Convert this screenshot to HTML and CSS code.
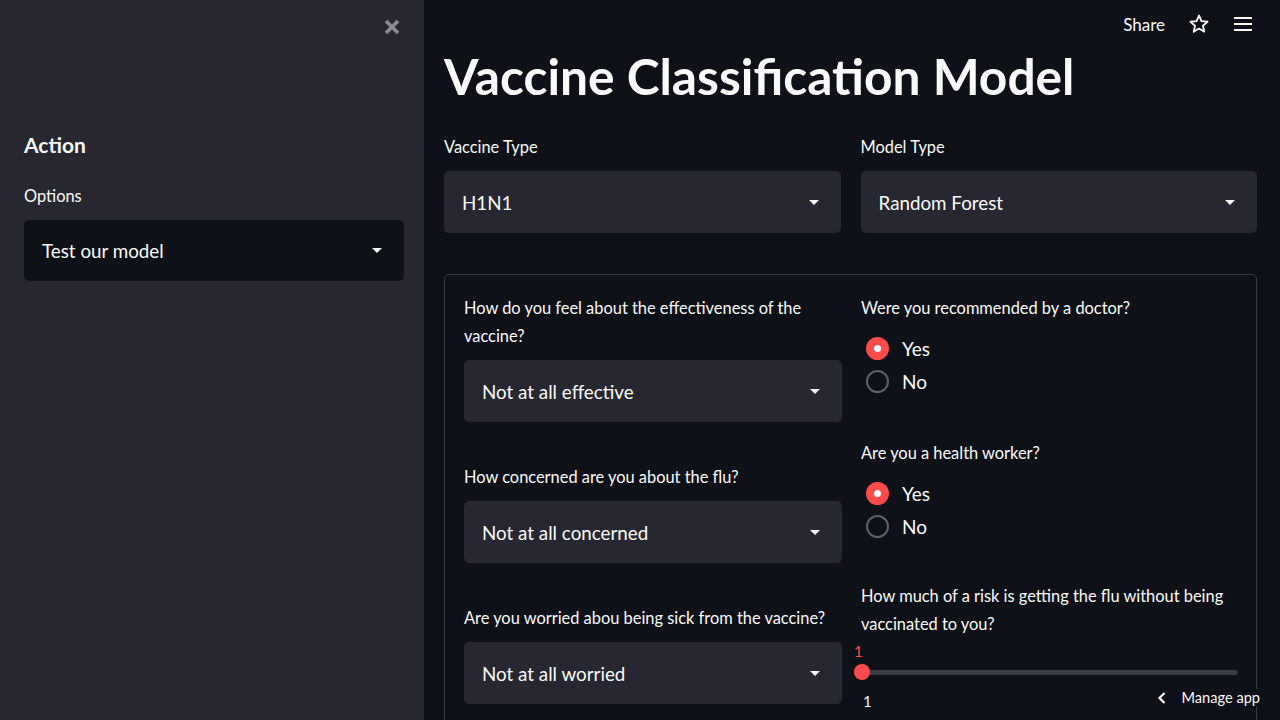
FILE: index.html
```html
<!DOCTYPE html>
<html>
<head>
<meta charset="utf-8">
<link rel="stylesheet" href="styles.css">
</head>
<body>
<div class="app">
  <aside class="sidebar">
    <div class="sb-top">
      <span class="close">
        <svg width="18" height="18" viewBox="0 0 18 18"><path d="M3 3 L15 15 M15 3 L3 15" stroke="#8b8c92" stroke-width="3.6" stroke-linecap="butt"/></svg>
      </span>
    </div>
    <div class="sb-content">
      <h2 class="sb-title">Action</h2>
      <div class="label">Options</div>
      <div class="select select-dark"><span>Test our model</span><span class="caret"></span></div>
    </div>
  </aside>
  <main class="main">
    <header class="topbar">
      <span class="share">Share</span>
      <svg class="star" width="22" height="22" viewBox="0 0 24 24"><path d="M12 2.8 L14.7 8.9 L21.3 9.5 L16.3 13.9 L17.8 20.4 L12 17 L6.2 20.4 L7.7 13.9 L2.7 9.5 L9.3 8.9 Z" fill="none" stroke="#fafafa" stroke-width="2" stroke-linejoin="round"/></svg>
      <svg class="menu" width="20" height="18" viewBox="0 0 20 18"><path d="M1 3 H19 M1 9 H19 M1 15 H19" stroke="#fafafa" stroke-width="2.2"/></svg>
    </header>
    <div class="block">
      <h1 class="title">Vaccine Classification Model</h1>
      <div class="cols">
        <div class="field">
          <div class="label">Vaccine Type</div>
          <div class="select"><span>H1N1</span><span class="caret"></span></div>
        </div>
        <div class="field">
          <div class="label">Model Type</div>
          <div class="select"><span>Random Forest</span><span class="caret"></span></div>
        </div>
      </div>
      <div class="form">
        <div class="form-col">
          <div class="field">
            <div class="label">How do you feel about the effectiveness of the vaccine?</div>
            <div class="select"><span>Not at all effective</span><span class="caret"></span></div>
          </div>
          <div class="field">
            <div class="label">How concerned are you about the flu?</div>
            <div class="select"><span>Not at all concerned</span><span class="caret"></span></div>
          </div>
          <div class="field">
            <div class="label">Are you worried abou being sick from the vaccine?</div>
            <div class="select"><span>Not at all worried</span><span class="caret"></span></div>
          </div>
        </div>
        <div class="form-col">
          <div class="field">
            <div class="label">Were you recommended by a doctor?</div>
            <div class="radios">
              <div class="radio"><span class="dot on"></span>Yes</div>
              <div class="radio"><span class="dot"></span>No</div>
            </div>
          </div>
          <div class="field">
            <div class="label">Are you a health worker?</div>
            <div class="radios">
              <div class="radio"><span class="dot on"></span>Yes</div>
              <div class="radio"><span class="dot"></span>No</div>
            </div>
          </div>
          <div class="field field-slider">
            <div class="label">How much of a risk is getting the flu without being vaccinated to you?</div>
            <div class="slider">
              <div class="slider-val">1</div>
              <div class="track"><span class="thumb"></span></div>
              <div class="slider-min">1</div>
            </div>
          </div>
        </div>
      </div>
    </div>
    <div class="manage">
      <svg width="12" height="14" viewBox="0 0 12 14"><path d="M8.5 2 L3.5 7 L8.5 12" fill="none" stroke="#fafafa" stroke-width="2.2"/></svg>
      <span>Manage app</span>
    </div>
  </main>
</div>
</body>
</html>
```
FILE: styles.css
```css
* { box-sizing: border-box; }
html, body {
  margin: 0;
  padding: 0;
  height: 100%;
  overflow: hidden;
}
body {
  font-family: "Lato", "Noto Sans", sans-serif;
  color: #fafafa;
  background: #0e1117;
}
.app {
  display: flex;
  height: 720px;
}
.sidebar {
  width: 424px;
  flex: 0 0 424px;
  background: #262730;
  display: flex;
  flex-direction: column;
}
.sb-top {
  height: 60px;
  flex-shrink: 0;
  display: flex;
  justify-content: flex-end;
  padding: 18px 23px 0 0;
}
.close { display: block; width: 18px; height: 18px; }
.close svg { display: block; }
.sb-content {
  padding: 70px 20px 0 24px;
}
.sb-title {
  margin: 0;
  font-size: 21px;
  font-weight: 700;
  line-height: 30px;
}
.sb-content .label {
  margin-top: 22px;
  margin-bottom: 10px;
}
.sb-content .select { height: 61px; }
.main {
  flex: 1;
  position: relative;
  display: flex;
  flex-direction: column;
  min-height: 0;
}
.topbar {
  height: 46px;
  flex-shrink: 0;
  display: flex;
  align-items: center;
  justify-content: flex-end;
  padding: 2px 27px 0 0;
}
.share {
  font-size: 17px;
  margin-right: 23px;
}
.star { margin-right: 23px; display: block; }
.menu { display: block; }
.block {
  flex-shrink: 0;
  padding: 0 23px 0 20px;
}
.title {
  margin: 0;
  font-size: 49.7px;
  font-weight: 700;
  line-height: 60px;
  letter-spacing: 0;
}
.cols {
  margin-top: 27px;
  display: grid;
  grid-template-columns: 1fr 1fr;
  gap: 20px;
}
.label {
  font-size: 16.4px;
  line-height: 28px;
  margin-bottom: 10px;
}
.select {
  height: 62px;
  background: #262730;
  border-radius: 5px;
  display: flex;
  align-items: center;
  justify-content: space-between;
  padding: 0 22px 0 18px;
  font-size: 18.8px;
}
.select-dark { background: #0e1117; }
.caret {
  width: 0;
  height: 0;
  border-left: 5px solid transparent;
  border-right: 5px solid transparent;
  border-top: 5px solid #fafafa;
}
.form {
  margin-top: 41px;
  border: 1px solid #3a3c44;
  border-radius: 5px;
  padding: 19px 18px 0 19px;
  display: grid;
  grid-template-columns: 378px 1fr;
  gap: 19px;
  height: 460px;
}
.form-col {
  display: flex;
  flex-direction: column;
}
.form-col .field + .field { margin-top: 41px; }
.form-col .field.field-slider { margin-top: 39px; }
.radios {
  display: flex;
  flex-direction: column;
}
.radio {
  height: 33px;
  display: flex;
  align-items: center;
  font-size: 19px;
  padding-left: 5px;
}
.dot {
  width: 23px;
  height: 23px;
  border-radius: 50%;
  border: 2px solid #5f6168;
  margin-right: 13px;
  position: relative;
}
.dot.on {
  background: #ff4b4b;
  border-color: #ff4b4b;
}
.dot.on::after {
  content: "";
  position: absolute;
  left: 50%;
  top: 50%;
  width: 7px;
  height: 7px;
  margin: -3.5px 0 0 -3.5px;
  border-radius: 50%;
  background: #fafafa;
}
.slider {
  margin-top: -8px;
}
.slider-val {
  color: #ff4b4b;
  font-size: 15px;
  line-height: 22px;
  margin-left: -7px;
}
.track {
  position: relative;
  height: 5px;
  margin: 8px 0 0 1px;
  background: #3a3c44;
  border-radius: 3px;
}
.thumb {
  position: absolute;
  left: -8px;
  top: -6px;
  width: 16px;
  height: 16px;
  border-radius: 50%;
  background: #ff4b4b;
}
.slider-min {
  font-size: 15px;
  line-height: 20px;
  margin: 16px 0 0 2px;
}
.manage {
  position: absolute;
  right: 20px;
  bottom: 14px;
  display: flex;
  align-items: center;
  gap: 13px;
  font-size: 14.6px;
  background: #0e1117;
}
.manage svg { display: block; }
```
